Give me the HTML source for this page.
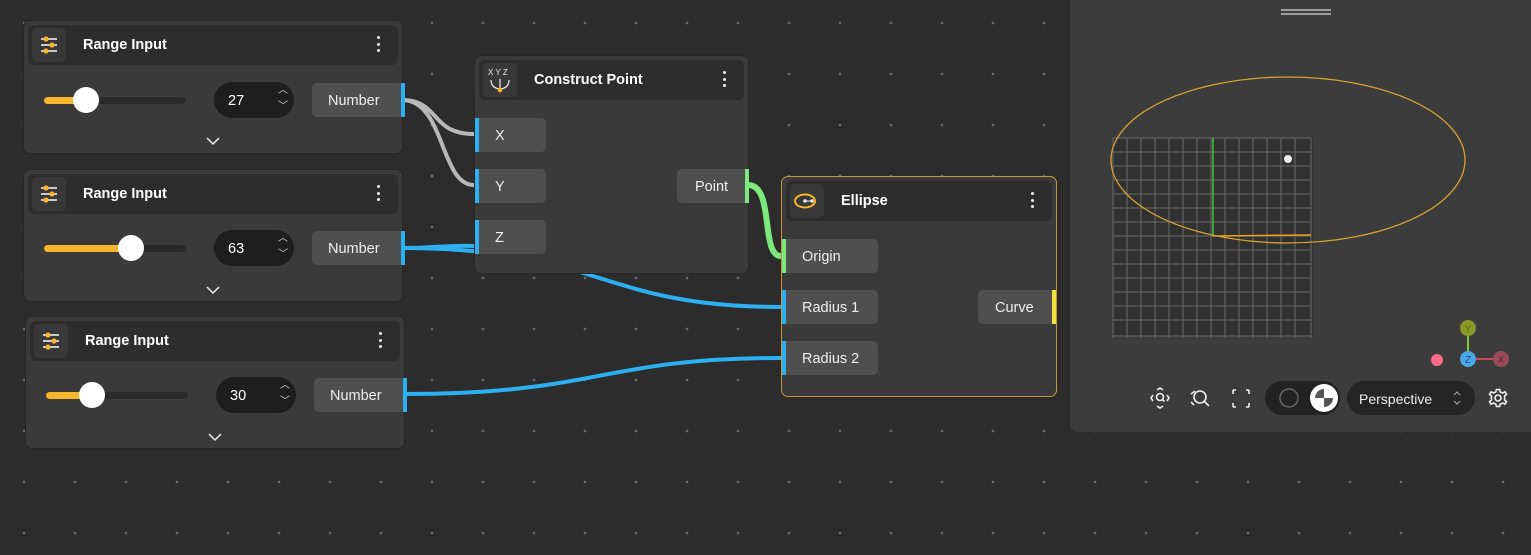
<!DOCTYPE html>
<html><head><style>
*{box-sizing:border-box;margin:0;padding:0}
body{width:1531px;height:555px;overflow:hidden;background:#2c2c2c;font-family:"Liberation Sans",sans-serif;position:relative;
background-image:radial-gradient(circle,#6a6a6a 1.1px,transparent 1.6px);background-size:51px 51px;background-position:-1.5px -2.5px}
.abs{position:absolute}
.node{position:absolute;background:#3a3a3a;border-radius:7px;border:1px solid #262626}
.hdr{position:absolute;left:4px;right:4px;top:4px;height:40px;background:#2d2d2d;border-radius:6px}
.ico{position:absolute;left:4px;top:3px;width:34px;height:34px;background:#383838;border-radius:5px}
.ttl{position:absolute;top:12px;color:#fff;font-weight:bold;font-size:14.5px}
.menu{position:absolute;right:18px;top:11px;width:3px}
.menu i{display:block;width:3px;height:3px;background:#eee;border-radius:50%;margin-bottom:3.5px}
.port{position:absolute;height:34px;background:#4f4f4f;border-radius:5px;color:#eee;font-size:14.5px;line-height:36px}
.track{position:absolute;height:7px;background:#2a2a2a;border-radius:4px}
.fill{position:absolute;height:7px;background:#f7b52c;border-radius:4px}
.thumb{position:absolute;width:26px;height:26px;background:#fff;border-radius:50%}
.num{position:absolute;width:80px;height:36px;background:#1e1e1e;border-radius:18px;color:#fff;font-size:14.5px;line-height:38px;padding-left:14px}
.arr{position:absolute;right:6px;color:#ddd;font-size:10px;line-height:10px}
.chev{position:absolute}
</style></head><body>

<svg class="abs" style="left:0;top:0" width="1531" height="555">
<g fill="none" stroke-width="4" stroke-linecap="round">
<path d="M402 100 C440 100 430 134 474 134" stroke="#b8b8b8"/>
<path d="M402 100 C445 100 440 185 474 185" stroke="#b8b8b8"/>
<path d="M402 248 C440 248 440 245 474 246" stroke="#2cb0f0"/>
<path d="M402 248 C600 248 600 307 781 307" stroke="#2cb0f0"/>
<path d="M404 394 C600 394 600 358 781 358" stroke="#2cb0f0"/>
<path d="M748 185 C775 185 760 256 781 256" stroke="#7de87d" stroke-width="6"/>
</g></svg>

<div class="node" style="left:23px;top:20px;width:380px;height:134px">
 <div class="hdr"><div class="ico"><svg width="34" height="34"><g stroke="#eee" stroke-width="1.6"><line x1="9" y1="11" x2="25" y2="11"/><line x1="9" y1="17" x2="25" y2="17"/><line x1="9" y1="23" x2="25" y2="23"/></g><g fill="#f7b52c"><circle cx="14" cy="11" r="2.6"/><circle cx="20" cy="17" r="2.6"/><circle cx="14" cy="23" r="2.6"/></g></svg></div><div class="ttl" style="left:55px">Range Input</div><div class="menu"><i></i><i></i><i></i></div></div>
 <div class="track" style="left:20px;top:76px;width:142px"></div><div class="fill" style="left:20px;top:76px;width:45px"></div><div class="thumb" style="left:49px;top:66px"></div>
 <div class="num" style="left:190px;top:61px">27<span class="arr" style="top:4px">︿</span><span class="arr" style="top:20px">﹀</span></div>
 <div class="port" style="left:288px;top:62px;width:92px;padding-left:16px">Number</div><div class="abs" style="left:377px;top:62px;width:4px;height:34px;background:#2cb0f0"></div>
 <svg class="chev" style="left:181px;top:115px" width="16" height="10"><path d="M2 2 L8 8 L14 2" stroke="#eee" stroke-width="1.5" fill="none"/></svg>
</div>
<div class="node" style="left:23px;top:169px;width:380px;height:133px">
 <div class="hdr"><div class="ico"><svg width="34" height="34"><g stroke="#eee" stroke-width="1.6"><line x1="9" y1="11" x2="25" y2="11"/><line x1="9" y1="17" x2="25" y2="17"/><line x1="9" y1="23" x2="25" y2="23"/></g><g fill="#f7b52c"><circle cx="14" cy="11" r="2.6"/><circle cx="20" cy="17" r="2.6"/><circle cx="14" cy="23" r="2.6"/></g></svg></div><div class="ttl" style="left:55px">Range Input</div><div class="menu"><i></i><i></i><i></i></div></div>
 <div class="track" style="left:20px;top:75px;width:142px"></div><div class="fill" style="left:20px;top:75px;width:90px"></div><div class="thumb" style="left:94px;top:65px"></div>
 <div class="num" style="left:190px;top:60px">63<span class="arr" style="top:4px">︿</span><span class="arr" style="top:20px">﹀</span></div>
 <div class="port" style="left:288px;top:61px;width:92px;padding-left:16px">Number</div><div class="abs" style="left:377px;top:61px;width:4px;height:34px;background:#2cb0f0"></div>
 <svg class="chev" style="left:181px;top:115px" width="16" height="10"><path d="M2 2 L8 8 L14 2" stroke="#eee" stroke-width="1.5" fill="none"/></svg>
</div>
<div class="node" style="left:25px;top:316px;width:380px;height:133px">
 <div class="hdr"><div class="ico"><svg width="34" height="34"><g stroke="#eee" stroke-width="1.6"><line x1="9" y1="11" x2="25" y2="11"/><line x1="9" y1="17" x2="25" y2="17"/><line x1="9" y1="23" x2="25" y2="23"/></g><g fill="#f7b52c"><circle cx="14" cy="11" r="2.6"/><circle cx="20" cy="17" r="2.6"/><circle cx="14" cy="23" r="2.6"/></g></svg></div><div class="ttl" style="left:55px">Range Input</div><div class="menu"><i></i><i></i><i></i></div></div>
 <div class="track" style="left:20px;top:75px;width:142px"></div><div class="fill" style="left:20px;top:75px;width:50px"></div><div class="thumb" style="left:53px;top:65px"></div>
 <div class="num" style="left:190px;top:60px">30<span class="arr" style="top:4px">︿</span><span class="arr" style="top:20px">﹀</span></div>
 <div class="port" style="left:288px;top:61px;width:92px;padding-left:16px">Number</div><div class="abs" style="left:377px;top:61px;width:4px;height:34px;background:#2cb0f0"></div>
 <svg class="chev" style="left:181px;top:115px" width="16" height="10"><path d="M2 2 L8 8 L14 2" stroke="#eee" stroke-width="1.5" fill="none"/></svg>
</div>

<div class="node" style="left:474px;top:55px;width:275px;height:219px">
 <div class="hdr"><div class="ico"><svg width="34" height="34"><text x="5" y="12" fill="#eee" font-size="8" font-family="Liberation Sans">X Y Z</text><path d="M8 17 Q8 25 17 26 Q26 25 26 17 M17 16 V26" stroke="#eee" stroke-width="1.2" fill="none"/><circle cx="17" cy="27" r="2.3" fill="#f7b52c"/></svg></div><div class="ttl" style="left:55px">Construct Point</div><div class="menu"><i></i><i></i><i></i></div></div>
 <div class="port" style="left:0;top:62px;width:71px;padding-left:20px">X</div><div class="abs" style="left:0;top:62px;width:4px;height:34px;background:#2cb0f0"></div>
 <div class="port" style="left:0;top:113px;width:71px;padding-left:20px">Y</div><div class="abs" style="left:0;top:113px;width:4px;height:34px;background:#2cb0f0"></div>
 <div class="port" style="left:0;top:164px;width:71px;padding-left:20px">Z</div><div class="abs" style="left:0;top:164px;width:4px;height:34px;background:#2cb0f0"></div>
 <div class="port" style="left:202px;top:113px;width:72px;padding-left:18px">Point</div><div class="abs" style="left:270px;top:113px;width:4px;height:34px;background:#7de87d"></div>
</div>

<div class="node" style="left:781px;top:176px;width:276px;height:221px;border:1.5px solid #c8963a">
 <div class="hdr"><div class="ico"><svg width="34" height="34"><ellipse cx="15" cy="17" rx="10" ry="6.5" stroke="#f7b52c" stroke-width="2" fill="none"/><circle cx="15" cy="17" r="1.7" fill="#eee"/><circle cx="22" cy="17" r="1.7" fill="#eee"/><line x1="15" y1="17" x2="22" y2="17" stroke="#eee" stroke-width="1"/></svg></div><div class="ttl" style="left:55px">Ellipse</div><div class="menu"><i></i><i></i><i></i></div></div>
 <div class="port" style="left:0;top:62px;width:96px;padding-left:20px">Origin</div><div class="abs" style="left:0;top:62px;width:4px;height:34px;background:#7de87d"></div>
 <div class="port" style="left:0;top:113px;width:96px;padding-left:20px">Radius 1</div><div class="abs" style="left:0;top:113px;width:4px;height:34px;background:#2cb0f0"></div>
 <div class="port" style="left:0;top:164px;width:96px;padding-left:20px">Radius 2</div><div class="abs" style="left:0;top:164px;width:4px;height:34px;background:#2cb0f0"></div>
 <div class="port" style="left:196px;top:113px;width:78px;padding-left:17px">Curve</div><div class="abs" style="left:270px;top:113px;width:4px;height:34px;background:#f0e040"></div>
</div>

<div class="abs" style="left:1070px;top:0;width:461px;height:432px;background:#3c3c3c;border-radius:0 0 0 8px"></div>
<svg class="abs" style="left:1070px;top:0" width="461" height="432">
 <line x1="211" y1="10" x2="261" y2="10" stroke="#fff" stroke-width="1"/><line x1="211" y1="14" x2="261" y2="14" stroke="#fff" stroke-width="1"/>
 <rect x="43" y="138" width="200" height="199" fill="#313131"/>
 <g stroke="#6a6a6a" stroke-width="1">
  <path d="M43 138 V338 M57 138 V338 M71 138 V338 M85 138 V338 M99 138 V338 M113 138 V338 M127 138 V338 M141 138 V338 M155 138 V338 M169 138 V338 M183 138 V338 M197 138 V338 M211 138 V338 M225 138 V338 M241 138 V338"/>
  <path d="M43 138 H241 M43 152 H241 M43 166 H241 M43 180 H241 M43 194 H241 M43 208 H241 M43 222 H241 M43 236 H241 M43 250 H241 M43 264 H241 M43 278 H241 M43 292 H241 M43 306 H241 M43 320 H241 M43 336 H241"/>
 </g>
 <line x1="143" y1="138" x2="143" y2="236" stroke="#3ec83e" stroke-width="1.5"/>
 <line x1="143" y1="236" x2="241" y2="235" stroke="#f0a020" stroke-width="1.5"/>
 <ellipse cx="218" cy="160" rx="177" ry="83" stroke="#d8a038" stroke-width="1.3" fill="none"/>
 <circle cx="218" cy="159" r="4" fill="#eee"/>
 <line x1="398" y1="335" x2="398" y2="359" stroke="#7ec83a" stroke-width="2"/>
 <line x1="398" y1="359" x2="430" y2="359" stroke="#c84a5a" stroke-width="2"/>
 <circle cx="398" cy="328" r="8" fill="#8a9a2a"/><text x="398" y="332" fill="#5a6a1a" font-size="10" text-anchor="middle" font-family="Liberation Sans">Y</text>
 <circle cx="431" cy="359" r="8" fill="#9a4a5a"/><text x="431" y="363" fill="#5a2a3a" font-size="10" text-anchor="middle" font-family="Liberation Sans">X</text>
 <circle cx="398" cy="359" r="8" fill="#4aa8e8"/><text x="398" y="363" fill="#1a4a7a" font-size="10" text-anchor="middle" font-family="Liberation Sans">Z</text>
 <circle cx="367" cy="360" r="6" fill="#ff6b8a"/>
 <g stroke="#eee" stroke-width="1.6" fill="none">
  <circle cx="90" cy="397" r="3.5"/><line x1="92.5" y1="399.5" x2="94.5" y2="401.5"/>
  <path d="M83 395 L81 398 L83 401 M97 395 L99 398 L97 401 M87 390 L90 388 L93 390 M87 406 L90 408 L93 406"/>
  <circle cx="130" cy="397" r="6"/><line x1="134.5" y1="401.5" x2="139" y2="406"/>
  <path d="M121 394 L125 391 M121 402 L124 405"/>
  <path d="M163 390 H166 M163 390 V394 M179 390 H176 M179 390 V394 M163 407 H166 M163 407 V403 M179 407 H176 M179 407 V403"/>
 </g>
 <rect x="195" y="381" width="75" height="34" rx="17" fill="#222"/>
 <circle cx="219" cy="398" r="9" stroke="#666" stroke-width="1.5" fill="none"/>
 <circle cx="254" cy="398" r="14" fill="#fff"/>
 <circle cx="254" cy="398" r="9" fill="#555"/>
 <path d="M254 389 A9 9 0 0 1 263 398 L254 398 Z M254 398 L254 407 A9 9 0 0 1 245 398 Z" fill="#fff"/>
 <rect x="277" y="381" width="128" height="34" rx="17" fill="#252525"/>
 <text x="289" y="404" fill="#eee" font-size="14" font-family="Liberation Sans">Perspective</text>
 <path d="M384 395 L387 392 L390 395 M384 401 L387 404 L390 401" stroke="#aaa" stroke-width="1" fill="none"/>
 <g transform="translate(428,398)" stroke="#eee" stroke-width="1.6" fill="none">
  <circle r="3"/>
  <path d="M-1.5 -8.5 H1.5 L2.3 -6 L4.6 -5 L7 -6.2 L8.5 -3.8 L6.6 -2 V2 L8.5 3.8 L7 6.2 L4.6 5 L2.3 6 L1.5 8.5 H-1.5 L-2.3 6 L-4.6 5 L-7 6.2 L-8.5 3.8 L-6.6 2 V-2 L-8.5 -3.8 L-7 -6.2 L-4.6 -5 L-2.3 -6 Z"/>
 </g>
</svg>
</body></html>
